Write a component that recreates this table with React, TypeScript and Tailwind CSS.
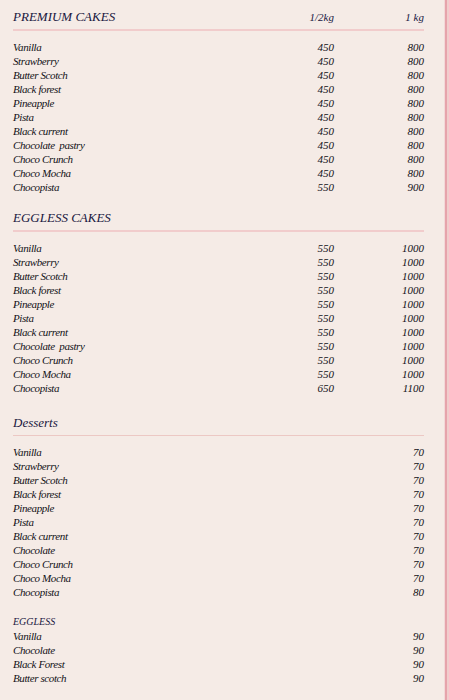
const premium: [string, string, string][] = [
	["Vanilla", "450", "800"],
	["Strawberry", "450", "800"],
	["Butter Scotch", "450", "800"],
	["Black forest", "450", "800"],
	["Pineapple", "450", "800"],
	["Pista", "450", "800"],
	["Black current", "450", "800"],
	["Chocolate  pastry", "450", "800"],
	["Choco Crunch", "450", "800"],
	["Choco Mocha", "450", "800"],
	["Chocopista", "550", "900"],
];

const eggless: [string, string, string][] = [
	["Vanilla", "550", "1000"],
	["Strawberry", "550", "1000"],
	["Butter Scotch", "550", "1000"],
	["Black forest", "550", "1000"],
	["Pineapple", "550", "1000"],
	["Pista", "550", "1000"],
	["Black current", "550", "1000"],
	["Chocolate  pastry", "550", "1000"],
	["Choco Crunch", "550", "1000"],
	["Choco Mocha", "550", "1000"],
	["Chocopista", "650", "1100"],
];

const desserts: [string, string][] = [
	["Vanilla", "70"],
	["Strawberry", "70"],
	["Butter Scotch", "70"],
	["Black forest", "70"],
	["Pineapple", "70"],
	["Pista", "70"],
	["Black current", "70"],
	["Chocolate", "70"],
	["Choco Crunch", "70"],
	["Choco Mocha", "70"],
	["Chocopista", "80"],
];

const egglessDesserts: [string, string][] = [
	["Vanilla", "90"],
	["Chocolate", "90"],
	["Black Forest", "90"],
	["Butter scotch", "90"],
];

const Heading = ({ title, half, full }: { title: string; half?: string; full?: string }) => (
	<div className="grid grid-cols-[1fr_60px_90px] items-center h-5 pb-0.5 box-content border-b-2 border-[#f1cccc]">
		<h2 className="text-[13px] leading-5 text-[#19173f]">{title}</h2>
		<span className="text-right text-[11px] text-[#19173f]">{half}</span>
		<span className="text-right text-[11px] text-[#19173f]">{full}</span>
	</div>
);

const PriceRows = ({ rows }: { rows: [string, string, string][] }) => (
	<div className="mt-[9px]">
		{rows.map(([name, half, full]) => (
			<div key={name} className="grid grid-cols-[1fr_60px_90px] leading-[14px] text-[11px] text-[#121116]">
				<span className="whitespace-pre tracking-[-0.4px]">{name}</span>
				<span className="text-right">{half}</span>
				<span className="text-right">{full}</span>
			</div>
		))}
	</div>
);

const SingleRows = ({ rows }: { rows: [string, string][] }) => (
	<div>
		{rows.map(([name, price]) => (
			<div key={name} className="flex justify-between leading-[14px] text-[11px] text-[#121116]">
				<span className="tracking-[-0.4px]">{name}</span>
				<span>{price}</span>
			</div>
		))}
	</div>
);

export default function App() {
	return (
		<div
			className="flex w-[449px] min-h-[700px] bg-[#f5ebe6] italic"
			style={{ fontFamily: '"Liberation Serif", "DejaVu Serif", serif' }}
		>
			<main className="flex-1 pl-[13px] pr-5 pt-[7px] pb-4">
				<section>
					<Heading title="PREMIUM CAKES" half="1/2kg" full="1 kg" />
					<PriceRows rows={premium} />
				</section>
				<section className="mt-3.5">
					<Heading title="EGGLESS CAKES" />
					<PriceRows rows={eggless} />
				</section>
				<section className="mt-[18px]">
					<div className="h-5 pb-0.5 box-content border-b border-[#ecc8c4]">
						<h2 className="text-[13px] leading-5 text-[#19173f]">Desserts</h2>
					</div>
					<div className="mt-[9px]">
						<SingleRows rows={desserts} />
					</div>
					<h3 className="mt-4 text-[10px] leading-[14px] text-[#19173f]">EGGLESS</h3>
					<SingleRows rows={egglessDesserts} />
				</section>
			</main>
			<div className="w-[5px] flex">
				<div className="w-px bg-[#f3d8d8]" />
				<div className="w-[2px] bg-[#e6a3ab]" />
				<div className="w-[2px] bg-[#f0cccc]" />
			</div>
		</div>
	);
}
